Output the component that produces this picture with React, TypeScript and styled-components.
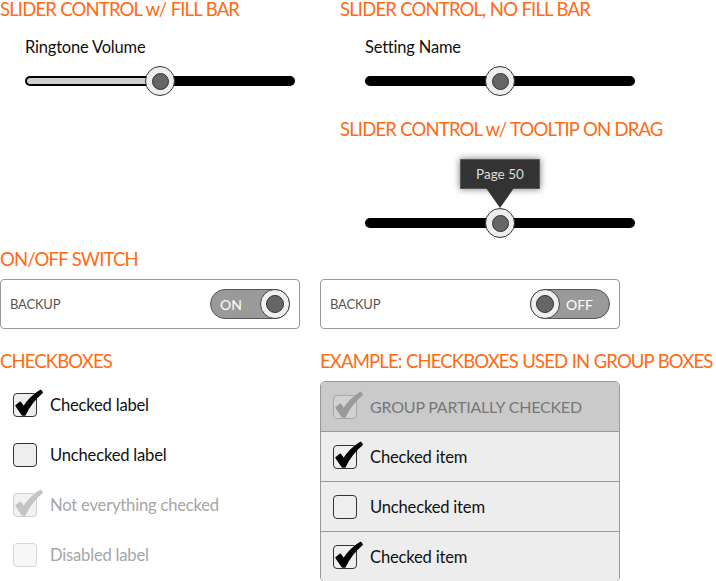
import React from "react";
import styled, { createGlobalStyle } from "styled-components";

const Global = createGlobalStyle`
  html, body { margin: 0; padding: 0; background: #fff; }
  body { font-family: Lato, "Open Sans", sans-serif; color: #000; }
  *, *::before, *::after { box-sizing: border-box; }
`;

const Page = styled.div`
  width: 716px;
  height: 581px;
  position: relative;
  overflow: hidden;
`;

const Section = styled.div<{ $cols: string; $h: number }>`
  display: grid;
  grid-template-columns: ${(p) => p.$cols};
  height: ${(p) => p.$h}px;
`;

const Col = styled.div`
  display: flex;
  flex-direction: column;
`;

const Heading = styled.h2<{ $mt?: number }>`
  margin: ${(p) => p.$mt ?? 0}px 0 0 0;
  font-size: 18.5px;
  font-weight: 400;
  line-height: 18px;
  height: 18px;
  color: #ff6a13;
  white-space: nowrap;
  letter-spacing: -0.85px;
  word-spacing: 0.5px;
`;

const SliderLabel = styled.div`
  margin: 20px 0 0 25px;
  font-size: 16.5px;
  line-height: 18px;
  color: #111;
  letter-spacing: -0.2px;
`;

const SliderWrap = styled.div<{ $mt: number }>`
  position: relative;
  margin: ${(p) => p.$mt}px 0 0 25px;
  width: 270px;
  height: 30px;
  display: flex;
  align-items: center;
`;

const Track = styled.div`
  position: relative;
  width: 100%;
  height: 10px;
  background: #000;
  border-radius: 5px;
`;

const Fill = styled.div`
  position: absolute;
  left: 2px;
  top: 2px;
  bottom: 2px;
  background: #cfcfcf;
  border-radius: 3px;
`;

const Thumb = styled.div`
  position: absolute;
  top: 50%;
  width: 30px;
  height: 30px;
  margin: -15px 0 0 -15px;
  border-radius: 50%;
  background: #eeeeee;
  border: 1px solid #333;
  display: flex;
  align-items: center;
  justify-content: center;
`;

const ThumbDot = styled.div<{ $size?: number }>`
  width: ${(p) => p.$size ?? 17}px;
  height: ${(p) => p.$size ?? 17}px;
  border-radius: 50%;
  background: #666;
  border: 1px solid #333;
`;

const Tooltip = styled.div`
  position: absolute;
  left: 50%;
  bottom: calc(100% + 20px);
  transform: translateX(-50%);
  width: 80px;
  height: 30px;
  background: #333;
  border: 1px solid #5a5a5a;
  box-shadow: 0 0 7px rgba(0, 0, 0, 0.55);
  color: #ddd;
  font-size: 13.5px;
  display: flex;
  align-items: center;
  justify-content: center;
  &::after {
    content: "";
    position: absolute;
    left: 50%;
    top: 100%;
    margin-left: -14px;
    border-left: 14px solid transparent;
    border-right: 14px solid transparent;
    border-top: 20px solid #333;
  }
`;

function Slider({
  value,
  fill,
  tooltip,
  mt,
}: {
  value: number;
  fill?: boolean;
  tooltip?: string;
  mt: number;
}) {
  return (
    <SliderWrap $mt={mt}>
      <Track>
        {fill && <Fill style={{ width: `calc(${value}% - 4px)` }} />}
      </Track>
      <Thumb style={{ left: `${value}%` }}>
        <ThumbDot />
        {tooltip && <Tooltip>{tooltip}</Tooltip>}
      </Thumb>
    </SliderWrap>
  );
}

const SwitchCard = styled.div`
  margin-top: 11px;
  width: 300px;
  height: 50px;
  border: 1px solid #999;
  border-radius: 4px;
  display: flex;
  align-items: center;
  justify-content: space-between;
  padding: 0 9px 0 9px;
`;

const SwitchLabel = styled.span`
  font-size: 13px;
  color: #555;
  letter-spacing: -0.2px;
`;

const Toggle = styled.div<{ $on: boolean }>`
  position: relative;
  width: 80px;
  height: 30px;
  border-radius: 15px;
  background: #9a9a9a;
  border: 1px solid #555;
  display: flex;
  align-items: center;
  justify-content: ${(p) => (p.$on ? "flex-start" : "flex-end")};
  padding: 0 ${(p) => (p.$on ? 0 : 16)}px 0 ${(p) => (p.$on ? 9 : 0)}px;
  color: #fff;
  font-size: 14px;
`;

const ToggleKnob = styled.div<{ $on: boolean }>`
  position: absolute;
  top: -1px;
  ${(p) => (p.$on ? "right: -1px;" : "left: -1px;")}
  width: 30px;
  height: 30px;
  border-radius: 50%;
  background: #f0f0f0;
  border: 1px solid #444;
  display: flex;
  align-items: center;
  justify-content: center;
`;

function Switch({ on }: { on: boolean }) {
  return (
    <Toggle $on={on}>
      {on ? "ON" : "OFF"}
      <ToggleKnob $on={on}>
        <ThumbDot $size={18} />
      </ToggleKnob>
    </Toggle>
  );
}

type BoxKind = "normal" | "faded" | "disabled" | "group";

const boxColors: Record<BoxKind, { border: string; bg: string; check: string }> = {
  normal: { border: "#333", bg: "#eee", check: "#000" },
  faded: { border: "#cfcfcf", bg: "#f2f2f2", check: "#c4c4c4" },
  disabled: { border: "#d8d8d8", bg: "#f7f7f7", check: "#ccc" },
  group: { border: "#a8a8a8", bg: "#d2d2d2", check: "#9a9a9a" },
};

const Box = styled.div<{ $kind: BoxKind }>`
  position: relative;
  flex: none;
  width: 24px;
  height: 24px;
  border-radius: 4px;
  border: 1px solid ${(p) => boxColors[p.$kind].border};
  background: ${(p) => boxColors[p.$kind].bg};
`;

const CheckSvg = styled.svg`
  position: absolute;
  left: 0;
  top: 0;
  overflow: visible;
`;

function CheckBox({ checked, kind }: { checked: boolean; kind: BoxKind }) {
  return (
    <Box $kind={kind}>
      {checked && (
        <CheckSvg width="22" height="22" viewBox="0 0 22 22">
          <path
            d="M2.2 11.8 L6.4 8.4 L9.8 13.2 C13.4 7.2 18.8 1.4 26.6 -3.4 L28 -1.4 C20.6 4.8 14.8 12.6 10.8 20.8 L8.4 20.8 Z"
            fill={boxColors[kind].check}
            stroke={boxColors[kind].check}
            strokeWidth="1.8"
            strokeLinejoin="round"
          />
        </CheckSvg>
      )}
    </Box>
  );
}

const CheckList = styled.div`
  display: flex;
  flex-direction: column;
  margin-top: 10px;
  padding-left: 13px;
`;

const CheckRow = styled.div`
  display: flex;
  align-items: center;
  gap: 13px;
  height: 50px;
`;

const CheckLabel = styled.span<{ $muted?: boolean }>`
  font-size: 16.6px;
  color: ${(p) => (p.$muted ? "#a6a6a6" : "#111")};
  letter-spacing: -0.2px;
`;

const GroupBox = styled.div`
  margin-top: 11px;
  width: 300px;
  border: 1px solid #999;
  border-radius: 5px;
  overflow: hidden;
  display: flex;
  flex-direction: column;
`;

const GroupRow = styled.div<{ $header?: boolean }>`
  display: flex;
  align-items: center;
  gap: 13px;
  height: ${(p) => (p.$header ? 49 : 50)}px;
  padding-left: 12px;
  background: ${(p) => (p.$header ? "#cacaca" : "#ededed")};
  & + & {
    border-top: 1px solid #999;
  }
`;

const GroupTitle = styled.span`
  font-size: 16px;
  color: #777;
  letter-spacing: -0.2px;
`;

export default function App() {
  return (
    <Page>
      <Global />
      <Section $cols="340px 376px" $h={240}>
        <Col>
          <Heading>SLIDER CONTROL w/ FILL BAR</Heading>
          <SliderLabel>Ringtone Volume</SliderLabel>
          <Slider value={50} fill mt={10} />
        </Col>
        <Col>
          <Heading>SLIDER CONTROL, NO FILL BAR</Heading>
          <SliderLabel>Setting Name</SliderLabel>
          <Slider value={50} mt={10} />
          <Heading $mt={24}>SLIDER CONTROL w/ TOOLTIP ON DRAG</Heading>
          <Slider value={50} tooltip="Page 50" mt={70} />
        </Col>
      </Section>
      <Section $cols="320px 396px" $h={108}>
        <Col>
          <Heading $mt={10}>ON/OFF SWITCH</Heading>
          <SwitchCard>
            <SwitchLabel>BACKUP</SwitchLabel>
            <Switch on />
          </SwitchCard>
        </Col>
        <Col>
          <Heading $mt={10} aria-hidden="true" />
          <SwitchCard>
            <SwitchLabel>BACKUP</SwitchLabel>
            <Switch on={false} />
          </SwitchCard>
        </Col>
      </Section>
      <Section $cols="320px 396px" $h={233}>
        <Col>
          <Heading $mt={4}>CHECKBOXES</Heading>
          <CheckList>
            <CheckRow>
              <CheckBox checked kind="normal" />
              <CheckLabel>Checked label</CheckLabel>
            </CheckRow>
            <CheckRow>
              <CheckBox checked={false} kind="normal" />
              <CheckLabel>Unchecked label</CheckLabel>
            </CheckRow>
            <CheckRow>
              <CheckBox checked kind="faded" />
              <CheckLabel $muted>Not everything checked</CheckLabel>
            </CheckRow>
            <CheckRow>
              <CheckBox checked={false} kind="disabled" />
              <CheckLabel $muted>Disabled label</CheckLabel>
            </CheckRow>
          </CheckList>
        </Col>
        <Col>
          <Heading $mt={4}>EXAMPLE: CHECKBOXES USED IN GROUP BOXES</Heading>
          <GroupBox>
            <GroupRow $header>
              <CheckBox checked kind="group" />
              <GroupTitle>GROUP PARTIALLY CHECKED</GroupTitle>
            </GroupRow>
            <GroupRow>
              <CheckBox checked kind="normal" />
              <CheckLabel>Checked item</CheckLabel>
            </GroupRow>
            <GroupRow>
              <CheckBox checked={false} kind="normal" />
              <CheckLabel>Unchecked item</CheckLabel>
            </GroupRow>
            <GroupRow>
              <CheckBox checked kind="normal" />
              <CheckLabel>Checked item</CheckLabel>
            </GroupRow>
          </GroupBox>
        </Col>
      </Section>
    </Page>
  );
}
